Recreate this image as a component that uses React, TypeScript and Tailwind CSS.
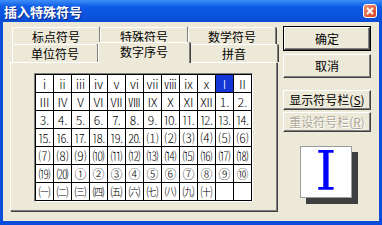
import React from "react";

const rows: string[][] = [
  ["ⅰ", "ⅱ", "ⅲ", "ⅳ", "ⅴ", "ⅵ", "ⅶ", "ⅷ", "ⅸ", "ⅹ", "Ⅰ", "Ⅱ"],
  ["Ⅲ", "Ⅳ", "Ⅴ", "Ⅵ", "Ⅶ", "Ⅷ", "Ⅸ", "Ⅹ", "Ⅺ", "Ⅻ", "⒈", "⒉"],
  ["⒊", "⒋", "⒌", "⒍", "⒎", "⒏", "⒐", "⒑", "⒒", "⒓", "⒔", "⒕"],
  ["⒖", "⒗", "⒘", "⒙", "⒚", "⒛", "⑴", "⑵", "⑶", "⑷", "⑸", "⑹"],
  ["⑺", "⑻", "⑼", "⑽", "⑾", "⑿", "⒀", "⒁", "⒂", "⒃", "⒄", "⒅"],
  ["⒆", "⒇", "①", "②", "③", "④", "⑤", "⑥", "⑦", "⑧", "⑨", "⑩"],
  ["㈠", "㈡", "㈢", "㈣", "㈤", "㈥", "㈦", "㈧", "㈨", "㈩", "", ""],
];

const tabBase =
  "flex justify-center border-l border-t border-white border-r border-r-[#808080] rounded-t-[2px] shadow-[1px_0_0_#404040] bg-[#ECE9D8] text-[12px] leading-none text-black";

const bevel =
  "flex items-center justify-center border-t border-l border-white border-r border-b border-r-[#404040] border-b-[#404040] shadow-[inset_-1px_-1px_0_#808080] bg-[#ECE9D8] text-[12px] leading-none";

export default function App() {
  return (
    <div className="w-[382px] h-[225px] flex flex-col bg-[#0B4DDA] font-['Noto_Sans_CJK_SC',sans-serif] overflow-hidden">
      {/* Title bar */}
      <div className="h-[22px] shrink-0 flex items-center justify-between pl-[4px] pr-[5px] bg-linear-to-b from-[#3D8EF8] via-[#0D5BE6] via-30% to-[#0A4CD6]">
        <span className="text-white font-bold text-[13px] leading-none [text-shadow:1px_1px_0_#0A2A8A]">
          插入特殊符号
        </span>
        <div className="w-[14px] h-[14px] rounded-[3px] border border-white bg-linear-to-br from-[#F0906E] to-[#D4401C] flex items-center justify-center">
          <svg width="8" height="8" viewBox="0 0 8 8">
            <path d="M1 1L7 7M7 1L1 7" stroke="white" strokeWidth="1.8" />
          </svg>
        </div>
      </div>

      {/* Body */}
      <div className="flex-1 mx-[3px] mb-[4px] bg-[#ECE9D8] flex pl-[7px] pt-[5px]">
        {/* Left: tab control */}
        <div className="w-[268px] flex flex-col">
          <div className="ml-[2px] w-[266px] flex flex-col">
            <div className="h-[17px] flex">
              <div className={`${tabBase} w-[88px] items-center pt-[1px]`}>标点符号</div>
              <div className={`${tabBase} w-[88px] items-center pt-[1px]`}>特殊符号</div>
              <div className={`${tabBase} w-[88px] items-center pt-[1px]`}>数学符号</div>
            </div>
            <div className="h-[18px] flex items-start">
              <div className={`${tabBase} w-[86px] h-[18px] items-center`}>单位符号</div>
              <div className={`${tabBase} relative z-10 w-[92px] h-[21px] -mt-[2px] items-start pt-[3px]`}>
                数字序号
              </div>
              <div className={`${tabBase} w-[88px] h-[18px] items-center`}>拼音</div>
            </div>
          </div>
          <div className="w-[267px] h-[149px] border-t border-l border-white border-r border-b border-r-[#808080] border-b-[#808080] shadow-[1px_1px_0_#404040] pl-[23px] pt-[10px]">
            <div className="w-fit border-t border-l border-[#808080] border-r border-b border-r-white border-b-white">
              <div className="grid grid-cols-[repeat(12,17px)] auto-rows-[17px] gap-px bg-black border border-black">
                {rows.flatMap((row, r) =>
                  row.map((c, i) => {
                    const sel = r === 0 && i === 10;
                    return (
                      <div
                        key={`${r}-${i}`}
                        className={
                          sel
                            ? "bg-[#1437D6] text-white flex items-center justify-center text-[12px] leading-none font-light"
                            : "bg-white text-black flex items-center justify-center text-[12px] leading-none font-light"
                        }
                      >
                        {c}
                      </div>
                    );
                  })
                )}
              </div>
            </div>
          </div>
        </div>

        {/* Right: buttons */}
        <div className="ml-[5px] w-[88px] -mt-[1px] flex flex-col">
          <div className="h-[25px] border border-black flex">
            <div className={`${bevel} flex-1`}>确定</div>
          </div>
          <div className={`${bevel} h-[24px] mt-[3px]`}>取消</div>
          <div className={`${bevel} h-[20px] mt-[12px]`}>
            显示符号栏(<span className="underline">S</span>)
          </div>
          <div className={`${bevel} h-[20px] mt-[2px] text-[#ACA899] [text-shadow:1px_1px_0_#ffffff]`}>
            重设符号栏(<span className="underline">R</span>)
          </div>
          <div className="mt-[14px] ml-[17px] w-[52px] h-[52px] bg-white border border-[#9D9D9D] shadow-[6px_6px_0_#3F3F3F] flex items-center justify-center">
            <span className="font-['DejaVu_Serif','Liberation_Serif',serif] text-[#0000FF] text-[54px] leading-none">
              Ⅰ
            </span>
          </div>
        </div>
      </div>
    </div>
  );
}
